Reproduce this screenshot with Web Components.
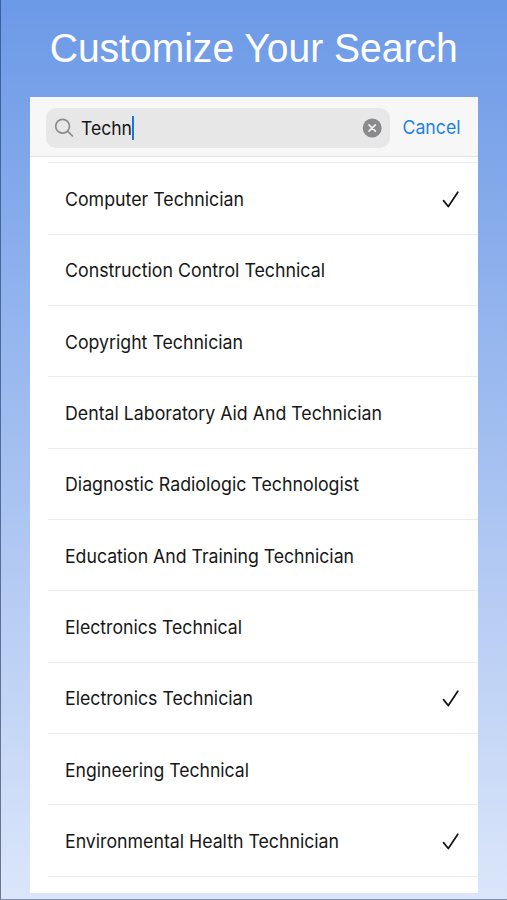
<!DOCTYPE html>
<html lang="en"><head><meta charset="utf-8"><title>Customize Your Search</title>
<style>html,body{margin:0;height:100%}body{overflow:hidden;font-family:Inter,"Liberation Sans",sans-serif}</style></head>
<body><search-screen></search-screen>
<script>
class CheckMark extends HTMLElement{constructor(){super();this.attachShadow({mode:'open'}).innerHTML=`<style>:host{display:block;width:20px;height:20px}svg{display:block}</style><svg width="20" height="20" viewBox="0 0 20 20" fill="none" stroke="#111" stroke-width="1.7" stroke-linecap="round" stroke-linejoin="round"><path d="M2.5 11.6 7.3 17.5 16.8 3.2"/></svg>`}}
customElements.define('check-mark',CheckMark);
class OptionRow extends HTMLElement{constructor(){super();const w=this.getAttribute('w');this.attachShadow({mode:'open'}).innerHTML=`<style>:host{display:block;height:71.33px;box-sizing:border-box;margin-left:18px;padding:1px 17px 0 16.5px;border-bottom:1px solid #ececed}div{height:100%;display:flex;align-items:center;justify-content:space-between}svg{display:block;overflow:visible}text{font-size:18.5px;fill:#161616}</style><div><svg width="${w}" height="24"><text x="0" y="18.8" textLength="${w}" lengthAdjust="spacingAndGlyphs">${this.getAttribute('label')}</text></svg>${this.hasAttribute('checked')?'<check-mark></check-mark>':''}</div>`}}
customElements.define('option-row',OptionRow);
class SearchBar extends HTMLElement{constructor(){super();this.attachShadow({mode:'open'}).innerHTML=`<style>:host{display:flex;box-sizing:border-box;height:60px;padding:11px 17px 8px 16px;background:#f7f7f8;border-bottom:1px solid #e2e3e4;justify-content:space-between}
.field{display:flex;align-items:center;box-sizing:border-box;width:344px;height:40px;border-radius:10px;background:#e7e7e8;padding:0 8px}
.field>svg{display:block;flex:none}.q{margin-left:7px;overflow:visible}.caret{width:2px;height:24px;background:#1877dc}.clear{margin-left:auto}
.cancel{height:40px;overflow:visible}text{font-size:18.5px}</style>
<div class="field"><svg width="20" height="20" viewBox="0 0 20 20" fill="none" stroke="#8a8b8e" stroke-width="1.7" stroke-linecap="round"><circle cx="8.6" cy="8.2" r="6.9"/><path d="m13.6 13.2 4.9 4.8"/></svg><svg class="q" width="51" height="24"><text x="0" y="19" textLength="51" lengthAdjust="spacingAndGlyphs" fill="#161616">Techn</text></svg><i class="caret"></i><svg class="clear" width="20" height="20" viewBox="0 0 20 20"><circle cx="10.2" cy="10" r="9.5" fill="#8a8a8c"/><path d="m7 6.8 6.4 6.4m0-6.4L7 13.2" stroke="#eee" stroke-width="1.7" stroke-linecap="round"/></svg></div>
<svg class="cancel" width="58" height="40"><text x="-.5" y="26" textLength="58" lengthAdjust="spacingAndGlyphs" fill="#1d7fe6">Cancel</text></svg>`}}
customElements.define('search-bar',SearchBar);
class SearchScreen extends HTMLElement{constructor(){super();const rows=[['Computer Technician',179,1],['Construction Control Technical',260],['Copyright Technician',178],['Dental Laboratory Aid And Technician',317],['Diagnostic Radiologic Technologist',294],['Education And Training Technician',289],['Electronics Technical',177],['Electronics Technician',188,1],['Engineering Technical',184],['Environmental Health Technician',274,1]];
this.attachShadow({mode:'open'}).innerHTML=`<style>:host{display:flex;flex-direction:column;box-sizing:border-box;height:900px;padding:0 29px 7px 30px;background:linear-gradient(#8190a8,#8190a8) 0 100%/100% 1px no-repeat,linear-gradient(#3a5f9e,#6a7890) 0 0/1.4px 100% no-repeat,linear-gradient(#6c99e7,#dbe6fa)}
h1{margin:0;height:97.4px;flex:none}h1 svg{display:block;overflow:visible}h1 text{font:40px "Liberation Sans",sans-serif;fill:#fff}
main{height:795.3px;background:#fff;overflow:hidden}.top{height:5px;margin-left:18px;border-bottom:1px solid #ececed}</style>
<h1><svg width="447" height="97"><text x="19.7" y="61.5" textLength="408" lengthAdjust="spacingAndGlyphs">Customize Your Search</text></svg></h1><main><search-bar></search-bar><div class="top"></div>${rows.map(r=>`<option-row label="${r[0]}" w="${r[1]}" ${r[2]?'checked':''}></option-row>`).join('')}</main>`}}
customElements.define('search-screen',SearchScreen);
</script></body></html>
